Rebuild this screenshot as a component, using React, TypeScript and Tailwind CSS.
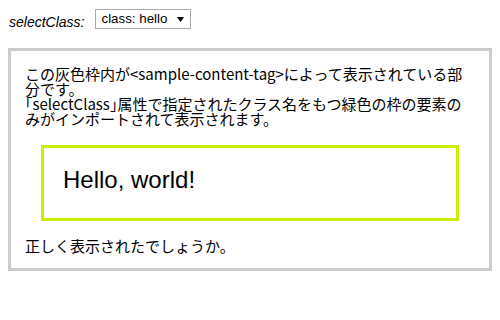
export default function App() {
  return (
    <div className="min-h-[320px] bg-white px-2 pt-[9px] text-black">
      <div className="flex items-start">
        <span className="ml-px mt-[5px] text-[14px] leading-[16px] italic font-['Liberation_Sans',sans-serif]">
          selectClass:
        </span>
        <div className="ml-[11px] flex h-[20px] w-[96px] items-center justify-between border border-[#a9a9a9] bg-white pl-[5px] pr-[5px] text-[13.33px] leading-[16px] font-['Liberation_Sans',sans-serif]">
          <span>class: hello</span>
          <svg width="7" height="5" viewBox="0 0 7 5" className="mr-[1px]">
            <path d="M0 0 H7 L3.5 5 Z" fill="#000" />
          </svg>
        </div>
      </div>

      <section className="mt-[18px] border-[3px] border-[#cccccc] px-[14px] pt-[15px] pb-[15px] font-['Noto_Sans_CJK_JP',sans-serif] text-[15px] leading-[15px]">
        <p>
          この灰色枠内が&lt;sample-content-tag&gt;によって表示されている部分です。
          <br />
          <span className="[font-feature-settings:'halt']">「</span>
          selectClass
          <span className="[font-feature-settings:'halt']">」</span>
          属性で指定されたクラス名をもつ緑色の枠の要素のみがインポートされて表示されます。
        </p>
        <div className="mx-[16px] mt-[19px] h-[76px] border-[3px] border-[#c5f000] pl-[19px] pt-[18px]">
          <h1 className="text-[24px] leading-[28px] font-['Liberation_Sans',sans-serif]">
            Hello, world!
          </h1>
        </div>
        <p className="mt-[17px]">正しく表示されたでしょうか。</p>
      </section>
    </div>
  );
}
